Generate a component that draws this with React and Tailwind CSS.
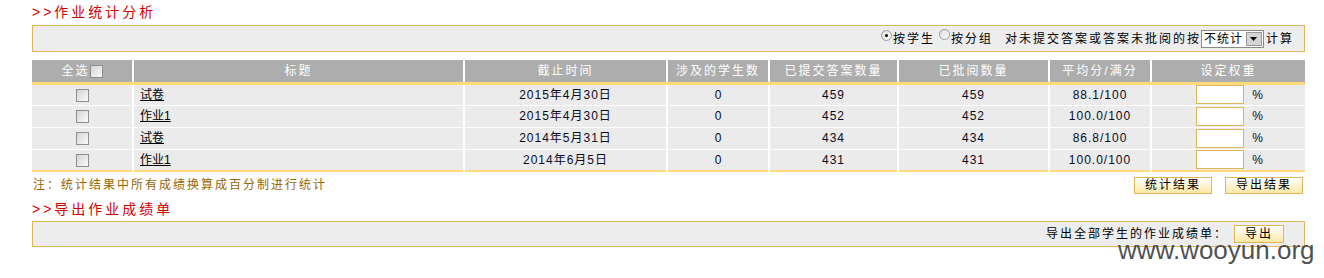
import React from 'react';

const rows = [
  { title: '试卷', date: '2015年4月30日', students: 0, submitted: 459, reviewed: 459, avg: '88.1/100' },
  { title: '作业1', date: '2015年4月30日', students: 0, submitted: 452, reviewed: 452, avg: '100.0/100' },
  { title: '试卷', date: '2014年5月31日', students: 0, submitted: 434, reviewed: 434, avg: '86.8/100' },
  { title: '作业1', date: '2014年6月5日', students: 0, submitted: 431, reviewed: 431, avg: '100.0/100' },
];

function Checkbox() {
  return (
    <span className="inline-block w-[13px] h-[13px] border border-[#8e8e8e] bg-gradient-to-br from-[#d4d4d4] to-[#fbfbfb] align-middle" />
  );
}

function Radio({ checked }) {
  return (
    <span className="relative -top-[3px] inline-flex items-center justify-center w-[11px] h-[11px] rounded-full border border-[#9a9a9a] bg-gradient-to-br from-[#dedede] to-white">
      {checked && <span className="w-[3px] h-[3px] rounded-full bg-black" />}
    </span>
  );
}

function Button({ children, className = '' }) {
  return (
    <button className={`h-[17px] border border-[#e0b65a] bg-gradient-to-b from-white to-[#fde7a4] text-[12px] leading-[15px] tracking-[2px] text-black ${className}`}>
      {children}
    </button>
  );
}

function SectionTitle({ children }) {
  return (
    <div className="h-[24px] flex items-center text-[14px] tracking-[3px] text-[#d10000]">
      {'>>'}{children}
    </div>
  );
}

export default function App() {
  const headers = ['标题', '截止时间', '涉及的学生数', '已提交答案数量', '已批阅数量', '平均分/满分', '设定权重'];

  return (
    <div className="relative w-[1324px] h-[278px] bg-white pl-[32px] font-['Liberation_Sans','Noto_Sans_CJK_SC',sans-serif] text-[12px] text-black">
      <SectionTitle>作业统计分析</SectionTitle>

      <div className="mt-[1px] w-[1273px] h-[27px] border border-[#e0b65a] bg-[#ededed] flex items-center justify-end pr-[10px] tracking-[2px]">
        <Radio checked />
        <span className="ml-[1px]">按学生</span>
        <span className="ml-[4px]"><Radio /></span>
        <span className="ml-[1px]">按分组</span>
        <span className="ml-[12px]">对未提交答案或答案未批阅的按</span>
        <span className="flex items-center w-[63px] h-[18px] border border-[#8a8a8a] bg-white tracking-normal">
          <span className="flex-1 pl-[2px] tracking-[1px]">不统计</span>
          <span className="w-[16px] h-[14px] mr-[1px] flex items-center justify-center bg-[#d4d4d4] border border-[#9a9a9a]">
            <svg width="7" height="4" viewBox="0 0 7 4"><path d="M0 0h7L3.5 4z" fill="#000" /></svg>
          </span>
        </span>
        <span className="ml-[2px]">计算</span>
      </div>

      <table className="mt-[8px] w-[1273px] table-fixed border-collapse">
        <colgroup>
          <col className="w-[101px]" />
          <col className="w-[331px]" />
          <col className="w-[203px]" />
          <col className="w-[102px]" />
          <col className="w-[129px]" />
          <col className="w-[151px]" />
          <col className="w-[102px]" />
          <col className="w-[154px]" />
        </colgroup>
        <thead>
          <tr className="h-[23px] bg-[#adadad] text-white tracking-[2px] border-b-[3px] border-[#ffd97a]">
            <th className="font-normal border-r-2 border-white">
              全选<Checkbox />
            </th>
            {headers.map((h, i) => (
              <th key={h} className={`font-normal ${i < headers.length - 1 ? 'border-r-2 border-white' : ''}`}>
                {h}
              </th>
            ))}
          </tr>
        </thead>
        <tbody>
          {rows.map((r, i) => (
            <tr key={i} className={`h-[22px] bg-[#ebebeb] ${i < rows.length - 1 ? 'border-b border-white' : 'border-b-2 border-[#ffd97a]'} text-center text-[#0a0a1e]`}>
              <td className="border-r-2 border-white"><Checkbox /></td>
              <td className="border-r-2 border-white text-left pl-[6px]">
                <a href="#" className="underline text-black">{r.title}</a>
              </td>
              <td className="border-r-2 border-white tracking-[1px]">{r.date}</td>
              <td className="border-r-2 border-white">{r.students}</td>
              <td className="border-r-2 border-white tracking-[1px]">{r.submitted}</td>
              <td className="border-r-2 border-white tracking-[1px]">{r.reviewed}</td>
              <td className="border-r-2 border-white tracking-[1px]">{r.avg}</td>
              <td>
                <span className="inline-flex items-center gap-[8px] pl-[2px]">
                  <input className="w-[48px] h-[19px] border border-[#e0b65a] bg-white outline-none" />
                  <span>%</span>
                </span>
              </td>
            </tr>
          ))}
        </tbody>
      </table>

      <div className="w-[1273px] h-[25px] flex items-center justify-between">
        <span className="pl-[1px] pt-[1px] text-[#996600] tracking-[2px]">注：统计结果中所有成绩换算成百分制进行统计</span>
        <div className="flex items-center gap-[13px] mr-[2px] mt-[2px]">
          <Button className="w-[78px]">统计结果</Button>
          <Button className="w-[78px]">导出结果</Button>
        </div>
      </div>

      <SectionTitle>导出作业成绩单</SectionTitle>

      <div className="w-[1273px] h-[26px] border border-[#e0b65a] bg-[#ededed] flex items-center justify-end pr-[20px] tracking-[2px]">
        <span className="mr-[6px]">导出全部学生的作业成绩单：</span>
        <Button className="w-[50px] h-[18px]">导出</Button>
      </div>

      <div className="absolute left-[1118px] top-[237px] text-[26px] leading-[26px] text-[#3a3a3a]/90 font-['Liberation_Sans',sans-serif]">
        www.wooyun.org
      </div>
    </div>
  );
}
